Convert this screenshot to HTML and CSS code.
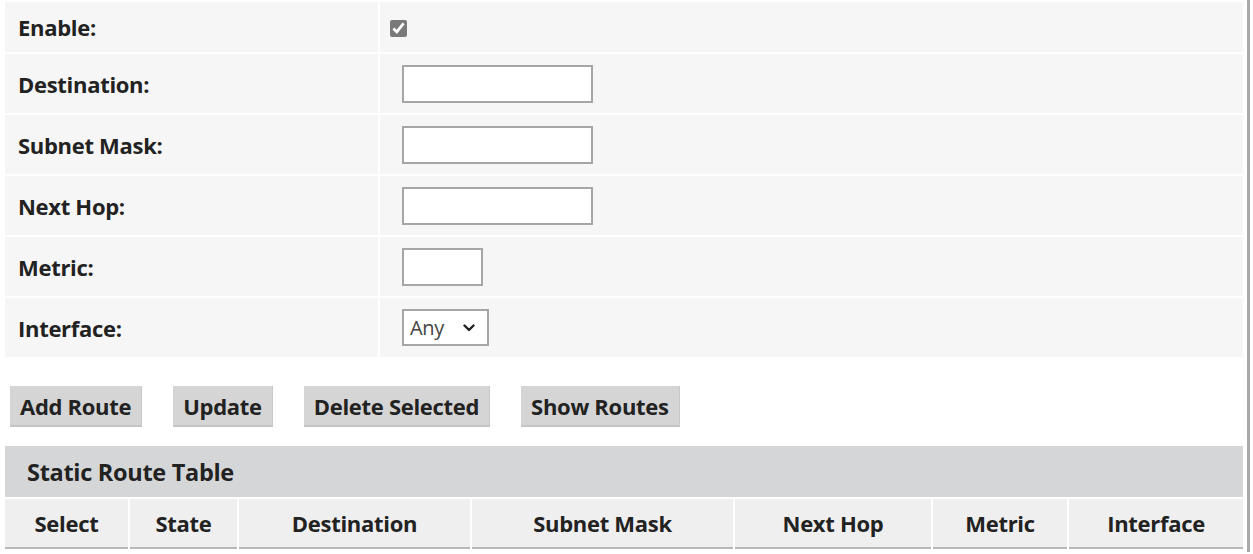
FILE: index.html
```html
<!DOCTYPE html>
<html lang="en">
<head>
    <meta charset="UTF-8">
    <meta name="viewport" content="width=device-width, initial-scale=1.0">
    <title>Static Routing</title>
    <link rel="stylesheet" href="styles.css">
</head>
<body>
    <div class="panel">
        <table class="form-table">
            <colgroup>
                <col class="label-col">
                <col class="value-col">
            </colgroup>
            <tr class="first-row">
                <td class="label">Enable:</td>
                <td class="value"><input type="checkbox" class="check" checked></td>
            </tr>
            <tr>
                <td class="label">Destination:</td>
                <td class="value"><input type="text" class="text-field"></td>
            </tr>
            <tr>
                <td class="label">Subnet Mask:</td>
                <td class="value"><input type="text" class="text-field"></td>
            </tr>
            <tr>
                <td class="label">Next Hop:</td>
                <td class="value"><input type="text" class="text-field"></td>
            </tr>
            <tr>
                <td class="label">Metric:</td>
                <td class="value"><input type="text" class="text-field short"></td>
            </tr>
            <tr>
                <td class="label">Interface:</td>
                <td class="value">
                    <span class="select-wrap">
                        <select class="select-field">
                            <option>Any</option>
                        </select>
                        <svg class="chevron" width="12" height="8" viewBox="0 0 12 8">
                            <path d="M1.5 1.5 L6 6 L10.5 1.5" fill="none" stroke="#222" stroke-width="2.4" stroke-linecap="round" stroke-linejoin="round"/>
                        </svg>
                    </span>
                </td>
            </tr>
        </table>

        <div class="actions">
            <button class="btn">Add Route</button>
            <button class="btn">Update</button>
            <button class="btn">Delete Selected</button>
            <button class="btn">Show Routes</button>
        </div>

        <table class="route-table">
            <colgroup>
                <col style="width: 123px">
                <col style="width: 107px">
                <col style="width: 231px">
                <col style="width: 261px">
                <col style="width: 196px">
                <col style="width: 134px">
                <col style="width: 174px">
            </colgroup>
            <tr>
                <td class="table-title" colspan="7">Static Route Table</td>
            </tr>
            <tr>
                <th>Select</th>
                <th>State</th>
                <th>Destination</th>
                <th>Subnet Mask</th>
                <th>Next Hop</th>
                <th>Metric</th>
                <th>Interface</th>
            </tr>
        </table>
    </div>
</body>
</html>
```

FILE: styles.css
```css
body {
    margin: 0;
    font-family: "Open Sans", "Noto Sans", sans-serif;
    color: #222;
    background-color: #fff;
}

.panel {
    width: 1247px;
    height: 552px;
    border-right: 3px solid #a9a9a9;
}

/* settings form */
.form-table {
    margin-left: 3px;
    width: 1242px;
    table-layout: fixed;
    border-collapse: separate;
    border-spacing: 2px;
}

.label-col {
    width: 373px;
}

.value-col {
    width: 863px;
}

.form-table td {
    background-color: #f6f6f6;
    height: 59px;
    padding: 0;
    vertical-align: middle;
}

.form-table .first-row td {
    height: 50px;
}

.label {
    padding-left: 13px !important;
    font-weight: bold;
    font-size: 22px;
    letter-spacing: -0.3px;
}

.value {
    padding-left: 22px !important;
}

.check {
    width: 17px;
    height: 17px;
    margin: 0 0 0 -12px;
    accent-color: #7a7a7a;
    vertical-align: middle;
}

.text-field {
    box-sizing: border-box;
    width: 191px;
    height: 38px;
    border: 2px solid #a4a6a8;
    background-color: #fff;
    padding: 0 6px;
    font-family: inherit;
    font-size: 18px;
    vertical-align: middle;
}

.text-field.short {
    width: 81px;
}

.select-wrap {
    position: relative;
    display: inline-block;
    vertical-align: middle;
}

.select-field {
    appearance: none;
    box-sizing: border-box;
    width: 87px;
    height: 37px;
    border: 2px solid #a4a6a8;
    border-radius: 0;
    background-color: #fff;
    padding: 0 0 0 6px;
    font-family: inherit;
    font-size: 20px;
    letter-spacing: -0.3px;
    color: #444;
    display: block;
}

.chevron {
    position: absolute;
    left: 61px;
    top: 15px;
    pointer-events: none;
}

/* buttons */
.actions {
    display: flex;
    gap: 31px;
    margin-top: 27px;
    padding-left: 10px;
}

.btn {
    height: 41px;
    padding: 0 10px;
    background-color: #d5d5d5;
    border: none;
    border-bottom: 2px solid #c4c4c4;
    border-right: 1px solid #c8c8c8;
    font-family: inherit;
    font-weight: bold;
    font-size: 22px;
    letter-spacing: -0.3px;
    color: #222;
    cursor: pointer;
}

.btn:hover {
    background-color: #c9c9c9;
}

/* route list */
.route-table {
    margin-top: 17px;
    margin-left: 3px;
    width: 1242px;
    table-layout: fixed;
    border-collapse: separate;
    border-spacing: 2px;
}

.table-title {
    height: 51px;
    padding: 0 0 0 22px;
    background-color: #d5d6d7;
    font-weight: bold;
    font-size: 23.5px;
    letter-spacing: -0.3px;
}

.route-table th {
    height: 48px;
    padding: 0;
    background-color: #efefef;
    border-bottom: 2px solid #b9b9b9;
    font-size: 22px;
    letter-spacing: -0.3px;
    text-align: center;
}
```
